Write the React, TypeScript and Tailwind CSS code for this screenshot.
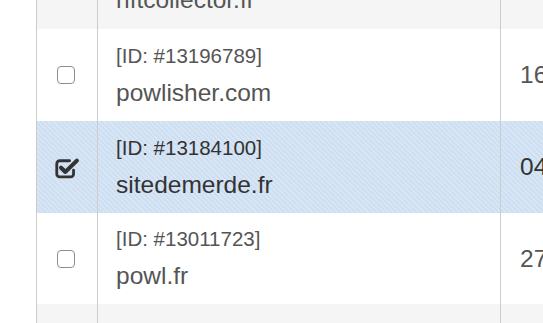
import React from "react";

type Row = { id?: string; domain?: string; date?: string; selected?: boolean; shade?: boolean; h: string; pb: string };

const rows: Row[] = [
  { id: "13201455", domain: "nftcollector.fr", date: "18", shade: true, h: "h-[86px]", pb: "pb-[12px]" },
  { id: "13196789", domain: "powlisher.com", date: "16", h: "h-[92px]", pb: "pb-[11px]" },
  { id: "13184100", domain: "sitedemerde.fr", date: "04", selected: true, h: "h-[92px]", pb: "pb-[11px]" },
  { id: "13011723", domain: "powl.fr", date: "27", h: "h-[91px]", pb: "pb-[11px]" },
  { shade: true, h: "h-[92px]", pb: "pb-[11px]" },
];

function CheckedIcon() {
  return (
    <svg width="25" height="23" viewBox="0 0 24 22" className="block">
      <path
        d="M14 4.5 H4.5 A2.8 2.8 0 0 0 1.7 7.3 V17.2 A2.8 2.8 0 0 0 4.5 20 H15 A2.8 2.8 0 0 0 17.8 17.2 V13.5"
        fill="none"
        stroke="#333"
        strokeWidth="2.7"
        strokeLinecap="round"
      />
      <path d="M5.8 11.2 L10 15.2 L21 4.4" fill="none" stroke="#333" strokeWidth="4" strokeLinecap="round" strokeLinejoin="round" />
    </svg>
  );
}

export default function App() {
  return (
    <div className="w-[543px] h-[323px] overflow-hidden bg-white" style={{ fontFamily: '"Liberation Sans", Arial, sans-serif' }}>
      <div className="mt-[-57px] flex flex-col">
        {rows.map((r, i) => {
          const bg = r.selected
            ? "bg-[repeating-linear-gradient(45deg,#d9e6f5_0px,#d9e6f5_1.5px,#cedff2_1.5px,#cedff2_3.6px)]"
            : r.shade
            ? "bg-[#f5f5f5]"
            : "bg-white";
          const txt = r.selected ? "text-[#333]" : "text-[#555]";
          return (
            <div key={i} className={`flex ${r.h}`}>
              <div className="w-[36px] shrink-0 bg-white" />
              <div className={`flex flex-1 border-l border-[#cccccc] ${bg}`}>
                <div className="w-[60px] shrink-0 flex items-center justify-center">
                  {r.domain &&
                    (r.selected ? (
                      <div className="ml-[1px] mt-[1px]">
                        <CheckedIcon />
                      </div>
                    ) : (
                      <div className="w-[18px] h-[18px] rounded-[4px] border-[1.5px] border-[#8e8e8e] bg-white mr-[2px]" />
                    ))}
                </div>
                <div className={`w-[403px] shrink-0 border-l border-[#cccccc] pl-[18px] flex flex-col justify-end ${r.pb} ${txt}`}>
                  {r.domain && (
                    <>
                      <div className="text-[20.5px] leading-[28px] mb-[6px]">[ID: #{r.id}]</div>
                      <div className="text-[24.5px] leading-[34px]">{r.domain}</div>
                    </>
                  )}
                </div>
                <div className={`flex-1 border-l border-[#cccccc] pl-[19px] flex items-center ${txt}`}>
                  {r.date && <span className="text-[24.5px] leading-[34px] whitespace-nowrap">{r.date}/11/2021</span>}
                </div>
              </div>
            </div>
          );
        })}
      </div>
    </div>
  );
}
